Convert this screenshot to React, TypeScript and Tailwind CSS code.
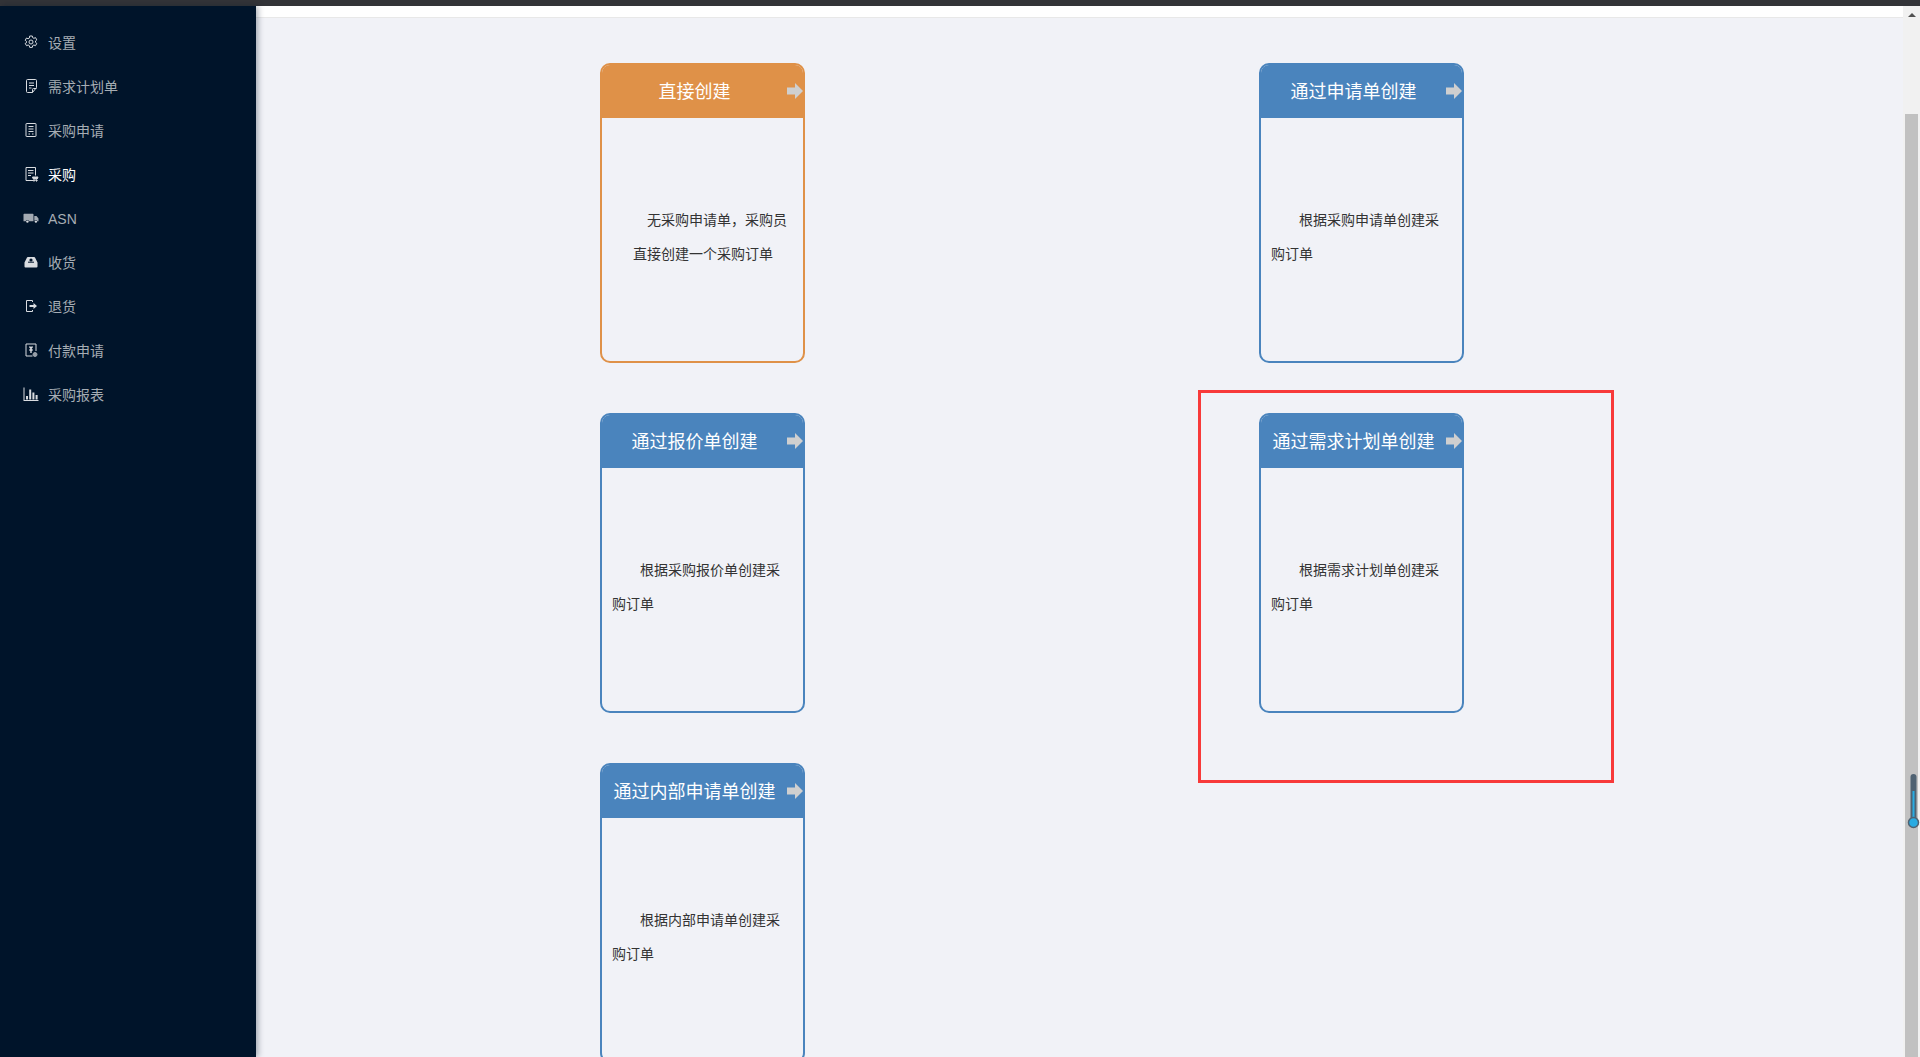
const FONT = "font-['Liberation_Sans','Noto_Sans_CJK_SC','Noto_Sans',sans-serif]";

function SvgBox({ children }: { children: React.ReactNode }) {
  return (
    <svg className="h-4 w-4 flex-none" viewBox="0 0 16 16" fill="none" stroke="currentColor" strokeWidth="1">
      {children}
    </svg>
  );
}

const menu: { label: string; icon: React.ReactNode; active?: boolean }[] = [
  {
    label: "设置",
    icon: (
      <SvgBox>
        <path d="M6.7 2h2.600l.4 1.700 1.200.6 1.600-.7 1.300 2.300-1.300 1.100v1.300l1.300 1.100-1.300 2.300-1.600-.7-1.200.6-.4 1.800H6.700l-.4-1.800-1.200-.6-1.600.7-1.300-2.300L3.500 8.700V7.400L2.200 6.300l1.300-2.300 1.600.7 1.200-.6z" />
        <circle cx="8" cy="8" r="2" />
      </SvgBox>
    ),
  },
  {
    label: "需求计划单",
    icon: (
      <SvgBox>
        <path d="M3.500 2.500a1 1 0 0 1 1-1h8a1 1 0 0 1 1 1v7l-4 5h-5a1 1 0 0 1-1-1z" />
        <path d="M6 5h5M6 7.500h5M6 10h2.500M9.500 14.500v-3a1 1 0 0 1 1-1h3" />
      </SvgBox>
    ),
  },
  {
    label: "采购申请",
    icon: (
      <SvgBox>
        <rect x="3" y="1.500" width="10" height="13" rx="0.5" />
        <path d="M5.500 4.500h5M5.500 7h5M5.500 9.500h5M5.500 12h1.500M9 12h1.500" />
      </SvgBox>
    ),
  },
  {
    label: "采购",
    active: true,
    icon: (
      <SvgBox>
        <path d="M10 14.500H3v-13h9.500v8" />
        <path d="M5 4.500h5.500M5 7h5.500M5 9.500h3" />
        <path d="M9.500 11h5.500l-.8 2h-3.900z" fill="currentColor" />
        <circle cx="11" cy="14.500" r=".7" fill="currentColor" />
        <circle cx="13.500" cy="14.500" r=".7" fill="currentColor" />
      </SvgBox>
    ),
  },
  {
    label: "ASN",
    icon: (
      <svg className="h-4 w-4 flex-none" viewBox="0 0 16 16" fill="currentColor">
        <path d="M1.200 3.800h8.600a.7.7 0 0 1 .7.7v6.700H6a1.700 1.700 0 0 0-3.300 0H.5V4.500a.7.7 0 0 1 .7-.7zM11.300 6h2.200l2 2.500v2.700h-1.100a1.700 1.700 0 0 0-3.100-.3z" opacity=".75" />
        <circle cx="4.400" cy="11.600" r="1.200" />
        <circle cx="12.900" cy="11.600" r="1.200" />
      </svg>
    ),
  },
  {
    label: "收货",
    icon: (
      <svg className="h-4 w-4 flex-none" viewBox="0 0 16 16" fill="currentColor">
        <path d="M1.500 8.500 4 3.500a1 1 0 0 1 .9-.5h6.200a1 1 0 0 1 .9.5l2.500 5v4a1 1 0 0 1-1 1h-11a1 1 0 0 1-1-1z" />
        <path d="M5 8.200h6" stroke="#00142a" strokeWidth="1" />
        <circle cx="8" cy="6" r="1.600" fill="#00142a" />
      </svg>
    ),
  },
  {
    label: "退货",
    icon: (
      <svg className="h-4 w-4 flex-none" viewBox="0 0 16 16" fill="currentColor">
        <path d="M9.500 4V2.500h-6v11h6V12" fill="none" stroke="currentColor" />
        <path d="M6.500 7h4V5l3.500 3-3.500 3V9h-4z" />
      </svg>
    ),
  },
  {
    label: "付款申请",
    icon: (
      <SvgBox>
        <path d="M9.500 14H3V2h10v7" />
        <path d="M6.500 4.500 8 6.500l1.500-2M8 6.500V11M6.300 8h3.400" strokeWidth="1.400" />
        <circle cx="12" cy="12.500" r="2" fill="currentColor" opacity=".7" />
      </SvgBox>
    ),
  },
  {
    label: "采购报表",
    icon: (
      <svg className="h-4 w-4 flex-none" viewBox="0 0 16 16" fill="currentColor">
        <path d="M.5 1.500h1v12.500H15.500v1H.5z" />
        <rect x="3" y="10" width="2" height="3.500" />
        <rect x="6.200" y="3.500" width="2" height="10" />
        <rect x="9.400" y="6.500" width="2" height="7" />
        <rect x="12.600" y="9" width="2" height="4.500" />
      </svg>
    ),
  },
];

function Sidebar() {
  return (
    <aside className="relative z-10 w-[256px] flex-none bg-[#00142a] pt-[15px] shadow-[2px_0_6px_rgba(0,21,41,0.35)]">
      {menu.map((item) => (
        <div
          key={item.label}
          className={`flex h-[44px] items-center gap-[9px] pl-[23px] text-[14px] ${item.active ? "text-white" : "text-[#a6adb4]"}`}
        >
          <span className="mb-[2px] text-[#d9dce0]">{item.icon}</span>
          <span>{item.label}</span>
        </div>
      ))}
    </aside>
  );
}

function Card({
  title,
  lines,
  orange = false,
  bodyClass = "pl-[10px] pr-[10px] indent-[28px]",
}: {
  title: string;
  lines: string;
  orange?: boolean;
  bodyClass?: string;
}) {
  return (
    <div className={`h-[300px] w-[205px] overflow-hidden rounded-[10px] border-2 ${orange ? "border-[#df9148]" : "border-[#4a84bd]"}`}>
      <div className={`flex h-[53px] items-center ${orange ? "bg-[#df9148]" : "bg-[#4a84bd]"}`}>
        <div className="w-[186px] pt-[2px] text-center text-[18px] text-white">{title}</div>
        <svg className="mb-[2px] h-[16px] w-[16px] flex-none" viewBox="0 0 16 16" fill="#cfcfcf">
          <path d="M0 4.500h8V0l8 8-8 8v-4.500H0z" />
        </svg>
      </div>
      <p className={`pt-[85px] text-[14px] leading-[34px] text-[#333] ${bodyClass}`}>{lines}</p>
    </div>
  );
}

function ScrollTrack() {
  return (
    <div className="relative w-[17px] flex-none bg-[#f1f1f1]">
      <div className="mx-auto mt-[7px] h-0 w-0 border-x-[4px] border-b-[4px] border-x-transparent border-b-[#505050]" />
      <div className="ml-[2px] mt-[97px] h-[943px] w-[13px] bg-[#c1c1c1]" />
      {/* the little thermometer some extension paints over the bar */}
      <svg className="absolute left-[4px] top-[767px]" width="13" height="56" viewBox="0 0 13 56">
        <rect x="3.500" y="1" width="6" height="48" rx="3" fill="#4f6272" />
        <rect x="5.500" y="18" width="2" height="30" fill="#29abe2" />
        <circle cx="6.500" cy="49.500" r="5" fill="#29abe2" stroke="#4f6272" strokeWidth="1.500" />
      </svg>
    </div>
  );
}

export default function App() {
  return (
    <div className={`flex h-[1057px] w-[1920px] flex-col overflow-hidden bg-[#f1f2f7] ${FONT}`}>
      <div className="h-[6px] flex-none bg-[#333438]" />
      <div className="flex min-h-0 flex-1">
        <Sidebar />
        <main className="min-w-0 flex-1 overflow-hidden">
          <div className="h-[12px] border-b border-[#e8e8e8] bg-white" />
          <div className="grid grid-cols-[659px_205px] gap-y-[50px] pl-[344px] pt-[45px]">
            <Card orange title="直接创建" lines="无采购申请单，采购员直接创建一个采购订单" bodyClass="pl-[31px] pr-[10px] indent-[14px]" />
            <Card title="通过申请单创建" lines="根据采购申请单创建采购订单" />
            <Card title="通过报价单创建" lines="根据采购报价单创建采购订单" />
            <div className="relative">
              <Card title="通过需求计划单创建" lines="根据需求计划单创建采购订单" />
              <div className="absolute left-[-61px] top-[-23px] h-[393px] w-[416px] border-[3px] border-[#f83a3a]" />
            </div>
            <Card title="通过内部申请单创建" lines="根据内部申请单创建采购订单" />
          </div>
        </main>
        <ScrollTrack />
      </div>
    </div>
  );
}
